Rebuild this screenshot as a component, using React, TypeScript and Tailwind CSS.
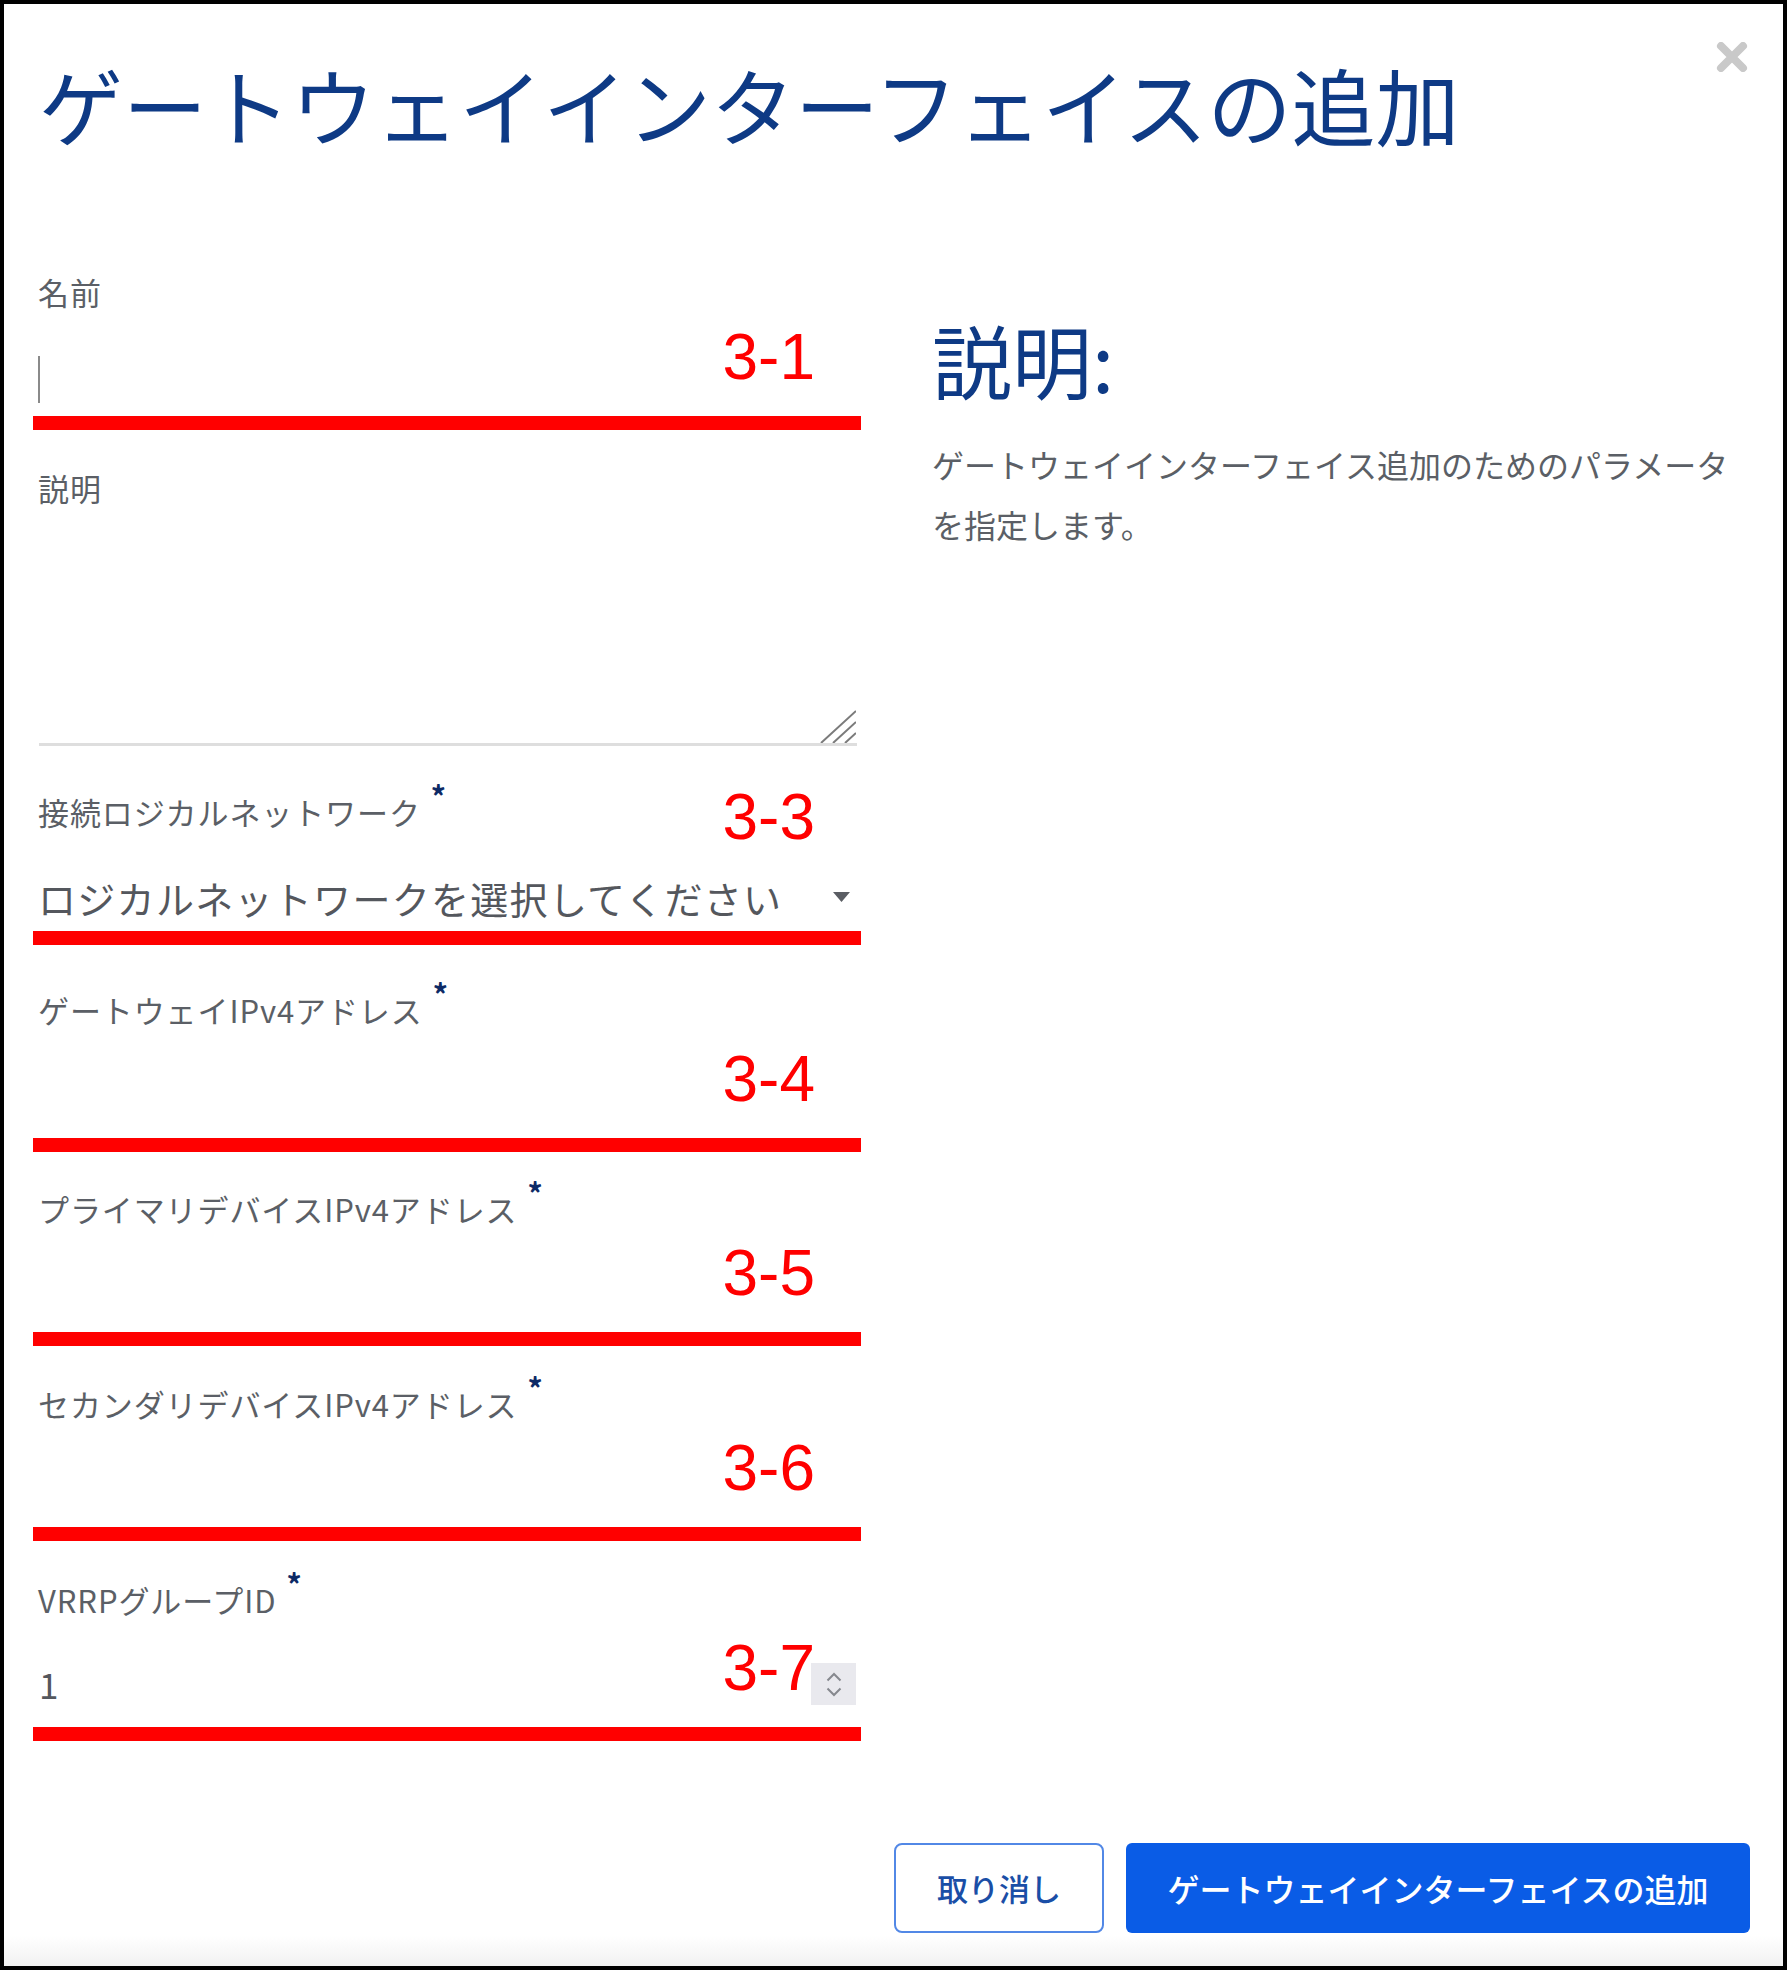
import * as React from "react";

const jp = { fontFamily: '"Noto Sans CJK JP", "Noto Sans", sans-serif' };
const arial = { fontFamily: '"Liberation Sans", Arial, sans-serif' };

function FieldLabel({ text, required }: { text: string; required?: boolean }) {
  return (
    <div className="h-[40px] flex items-center pl-[5px] text-[31px] leading-[40px] tracking-[0.9px] text-[#5b5f66]">
      <span>{text}</span>
      {required && (
        <span className="self-start ml-[10px] -mt-[12px] text-[30px] leading-none font-bold text-[#0d2a66]">*</span>
      )}
    </div>
  );
}

function RedBar() {
  return <div className="h-[14px] bg-[#ff0000]" />;
}

function Note({ text, className }: { text: string; className: string }) {
  return (
    <span
      style={arial}
      className={"absolute right-[46px] text-[64px] leading-none text-[#ff0000] " + className}
    >
      {text}
    </span>
  );
}

function CloseIcon() {
  return (
    <svg width="32" height="30" viewBox="0 0 32 30">
      <path d="M5 4 L27 26 M27 4 L5 26" stroke="#c9c9c9" strokeWidth="8" strokeLinecap="round" />
    </svg>
  );
}

export default function App() {
  return (
    <div style={jp} className="w-[1787px] h-[1970px] border-[4px] border-black bg-white flex flex-col relative">
      <button className="absolute top-[38px] right-[35px]">
        <CloseIcon />
      </button>

      <h1 className="pl-[35px] pt-[58px] text-[84px] leading-none font-normal text-[#0e3a85] whitespace-nowrap">
        ゲートウェイインターフェイスの追加
      </h1>

      <div className="flex pl-[29px] pr-[33px]">
        {/* left: form */}
        <div className="w-[828px] shrink-0 pt-[126px]">
          <div>
            <FieldLabel text="名前" />
            <div className="relative h-[104px] pt-[44px] pl-[5px]">
              <div className="w-[2px] h-[47px] bg-[#8a8a8a]" />
              <Note text="3-1" className="bottom-[27px]" />
            </div>
            <RedBar />
          </div>

          <div className="mt-[38px]">
            <FieldLabel text="説明" />
            <div className="relative h-[235px]">
              <svg className="absolute right-[5px] bottom-0" width="36" height="33" viewBox="0 0 36 33">
                <path d="M1 33 L36 1 M13 33 L36 12 M25 33 L36 23" stroke="#7b7b7b" strokeWidth="2" />
              </svg>
            </div>
            <div className="ml-[6px] mr-[4px] h-[3px] bg-[#dedede]" />
          </div>

          <div className="mt-[46px] relative">
            <FieldLabel text="接続ロジカルネットワーク" required />
            <Note text="3-3" className="top-[-7px]" />
            <div className="h-[99px] pt-[31px] pl-[5px] pr-[11px] flex items-center justify-between">
              <span className="text-[38px] tracking-[1.3px] text-[#54575d]">ロジカルネットワークを選択してください</span>
              <svg width="17" height="10" viewBox="0 0 17 10">
                <polygon points="0,0 17,0 8.5,10" fill="#5a5d63" />
              </svg>
            </div>
            <RedBar />
          </div>

          <div className="mt-[45px]">
            <FieldLabel text="ゲートウェイIPv4アドレス" required />
            <div className="relative h-[108px]">
              <Note text="3-4" className="bottom-[27px]" />
            </div>
            <RedBar />
          </div>

          <div className="mt-[37px]">
            <FieldLabel text="プライマリデバイスIPv4アドレス" required />
            <div className="relative h-[103px]">
              <Note text="3-5" className="bottom-[27px]" />
            </div>
            <RedBar />
          </div>

          <div className="mt-[38px]">
            <FieldLabel text="セカンダリデバイスIPv4アドレス" required />
            <div className="relative h-[103px]">
              <Note text="3-6" className="bottom-[27px]" />
            </div>
            <RedBar />
          </div>

          <div className="mt-[39px]">
            <FieldLabel text="VRRPグループID" required />
            <div className="relative h-[107px] pt-[21px] pl-[6px] pr-[5px] flex items-center justify-between">
              <span className="text-[35px] text-[#54575d]">1</span>
              <div className="w-[45px] h-[42px] bg-[#e9e9ee] flex flex-col items-center justify-center gap-[5px]">
                <svg width="16" height="10" viewBox="0 0 16 10">
                  <path d="M1.5 8.5 L8 2 L14.5 8.5" stroke="#86888e" strokeWidth="2" fill="none" />
                </svg>
                <svg width="16" height="10" viewBox="0 0 16 10">
                  <path d="M1.5 1.5 L8 8 L14.5 1.5" stroke="#86888e" strokeWidth="2" fill="none" />
                </svg>
              </div>
              <Note text="3-7" className="bottom-[27px]" />
            </div>
            <RedBar />
          </div>
        </div>

        {/* right: help */}
        <div className="ml-[71px] flex-1 pt-[172px]">
          <h2 className="text-[80px] leading-none font-normal text-[#0e3a85]">説明:</h2>
          <p className="mt-[36px] text-[32px] leading-[60px] text-[#5b5f66]">
            ゲートウェイインターフェイス追加のためのパラメータを指定します。
          </p>
        </div>
      </div>

      <div className="mt-auto flex justify-end gap-[22px] pr-[33px] pb-[3px]">
        <button className="w-[210px] h-[90px] rounded-[8px] border-2 border-[#5288e6] bg-white text-[31px] font-medium text-[#1a4ea6]">
          取り消し
        </button>
        <button className="w-[624px] h-[90px] rounded-[6px] bg-[#0a5ce6] text-[32px] font-medium text-white">
          ゲートウェイインターフェイスの追加
        </button>
      </div>
      <div className="h-[30px] bg-gradient-to-b from-white to-[#f1f1f1]" />
    </div>
  );
}
